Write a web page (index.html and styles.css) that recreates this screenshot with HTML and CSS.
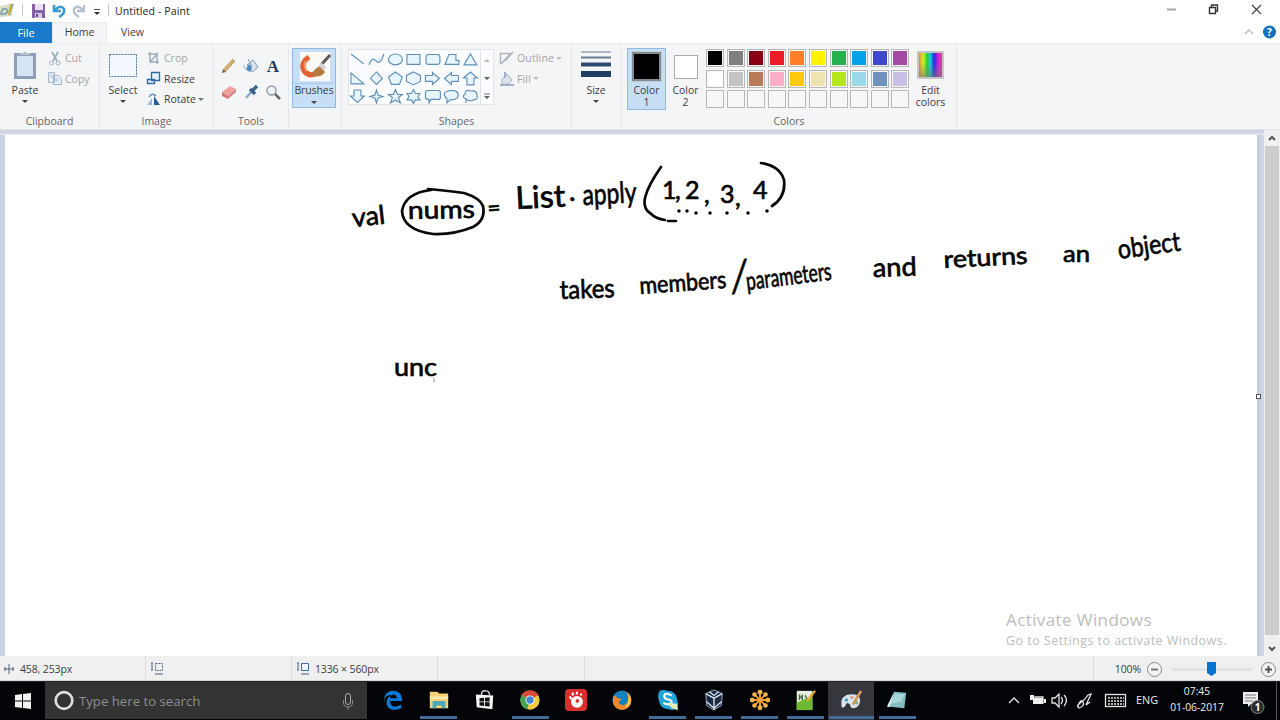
FILE: index.html
```html
<!DOCTYPE html>
<html lang="en">
<head>
<meta charset="utf-8">
<title>Untitled - Paint</title>
<link rel="stylesheet" href="styles.css">
</head>
<body>
<div class="window">
  <header class="titlebar">
    <svg class="quick" width="112" height="22" viewBox="0 0 112 22">
      <path d="M0 6l5-1 8-2-1 13-12 1z" fill="#d9dfc4"/><path d="M1 14q1-7 5-5t-1 5zM9 15l4-11" fill="none" stroke="#7f9fae" stroke-width="1.7"/><path d="M11 4l-2 11" stroke="#d8ae3c" stroke-width="2"/>
      <path d="M22.5 4v12M108.500 4v12" stroke="#c4c4c4"/>
      <path d="M32 4h13v14H32z" fill="#8560a8"/><path d="M35 4h8v6h-8z" fill="#e9e3f2"/><path d="M35 13h7v5h-7z" fill="#d6c8e4"/><path d="M36 14h2v3h-2z" fill="#65478c"/>
      <path d="M54 5v6h7M55 10q6-6 9-1 1 5-5 8" fill="none" stroke="#3a9ad0" stroke-width="2.6"/>
      <path d="M84 5v6h-7M83 10q-6-6-9-1-1 5 5 8" fill="none" stroke="#b4c1d0" stroke-width="2.3"/>
      <path d="M94 9.500h6" stroke="#555"/><path d="M94 12h6l-3 3z" fill="#333"/>
    </svg>
    <span class="title">Untitled - Paint</span>
    <svg class="winbtns" width="100" height="20" viewBox="0 0 100 20"><path d="M0 9.500h9" stroke="#aaa" stroke-width="2"/><path d="M42.500 7.500h6v6h-6zM44.500 7v-2h6v6h-2" fill="none" stroke="#333" stroke-width="1.400"/><path d="M85 5l9 9M94 5l-9 9" stroke="#444" stroke-width="1.200"/></svg>
  </header>
  <nav class="tabs">
    <span class="tab file">File</span><span class="tab home">Home</span><span class="tab view">View</span>
    <svg class="help" width="38" height="21" viewBox="0 0 38 21"><path d="M3 12l4-4 4 4" fill="none" stroke="#bbb" stroke-width="1.300"/><circle cx="27.500" cy="10" r="6.500" fill="#1472bd"/><text x="27.500" y="14" class="q">?</text></svg>
  </nav>

  <section class="ribbon">
    <div class="group clipboard">
      <div class="body">
        <div class="big paste"><svg width="26" height="32" viewBox="0 0 26 32"><rect x="2" y="9" width="22" height="26" fill="#8f9fb8"/><rect x="5" y="12" width="16" height="20" fill="#d6e3f3"/><path d="M8 11V9h3q2-3 4 0h3v2z" fill="#b9c1cd"/></svg><span>Paste</span><i></i></div>
        <div class="rows muted">
          <div><svg width="16" height="16" viewBox="0 0 16 16"><path d="M5 2l5 9M11 2L6 11" stroke="#a0adbe" stroke-width="1.700"/><circle cx="4.500" cy="13" r="2" fill="none" stroke="#9eb3cd"/><circle cx="11" cy="13" r="2" fill="none" stroke="#9eb3cd"/></svg>Cut</div>
          <div><svg width="16" height="16" viewBox="0 0 16 16"><path d="M1.500 1.500h6v10h-6zM6.500 4.500h5l3 3v6h-8z" fill="#e8eef5" stroke="#a6b6ca"/><path d="M8 8h4M8 10h4M3 4h3M3 6h3" stroke="#b2c5db"/></svg>Copy</div>
        </div>
      </div><footer>Clipboard</footer>
    </div>
    <div class="group image">
      <div class="body">
        <div class="big"><svg width="30" height="32" viewBox="0 0 30 32"><rect x="1.500" y="10.500" width="27" height="22" fill="#f2f8fe" stroke="#4d7199" stroke-dasharray="2 1"/></svg><span>Select</span><i></i></div>
        <div class="rows">
          <div class="off"><svg width="16" height="16" viewBox="0 0 16 16"><path d="M4 2v10h9M2 4h9v10M5 11l7-8" fill="none" stroke="#9caabb" stroke-width="1.400"/></svg>Crop</div>
          <div><svg width="16" height="16" viewBox="0 0 16 16"><path d="M5.500 1.500h8v8h-8zM1.500 8.500h7v4h-7z" fill="#e7f1fb" stroke="#2d6ba5" stroke-width="1.300"/></svg>Resize</div>
          <div><svg width="16" height="16" viewBox="0 0 16 16"><path d="M1 14l5-7v7z" fill="#9bbad8"/><path d="M8 5l6 9H8z" fill="#245f94"/><path d="M3 6q3-5 7-1" fill="none" stroke="#598db9" stroke-width="1.400"/></svg>Rotate<b></b></div>
        </div>
      </div><footer>Image</footer>
    </div>
    <div class="group tools">
      <div class="body toolgrid">
        <svg viewBox="0 0 18 18"><path d="M4 14L14 3" stroke="#c69a5c" stroke-width="3.500"/><path d="M4 14l9-10" stroke="#edcf93"/><path d="M2 16l1-4 3 3z" fill="#75624f"/></svg>
        <svg viewBox="0 0 18 18"><path d="M5 8l6-5 5 7-6 5z" fill="#d9e5ef" stroke="#819bb2"/><path d="M2 7q-1 5 2 5l3-5 3 4-2 4-5-3z" fill="#4d86bb"/><path d="M6 2l4 8" stroke="#8197ac"/></svg>
        <svg viewBox="0 0 18 18"><text class="letter" x="9" y="15">A</text></svg>
        <svg viewBox="0 0 18 18"><path d="M2 9l8-6 6 3-8 7z" fill="#f2a1a1"/><path d="M2 9l6 4v3l-6-3z" fill="#d87474"/><path d="M8 13l8-7v3l-8 7z" fill="#df8080"/></svg>
        <svg viewBox="0 0 18 18"><path d="M4 15l7-8" stroke="#8eabc9" stroke-width="2.500"/><path d="M8 6l5 5M10 8l5-5" stroke="#386691" stroke-width="3.500"/></svg>
        <svg viewBox="0 0 18 18"><circle cx="7.500" cy="7.500" r="4.500" fill="#edf4fa" stroke="#9299a2" stroke-width="1.400"/><path d="M11 11l5 5" stroke="#676a70" stroke-width="2.500"/></svg>
      </div><footer>Tools</footer>
    </div>
    <div class="group brushes"><div class="brushbtn">
      <svg width="41" height="34" viewBox="0 0 41 34"><rect x="6" y="3" width="30" height="29" fill="#fbfaf7"/><path d="M15 8q-9 6-5 14 6 7 14 1" fill="none" stroke="#df6334" stroke-width="5"/><path d="M12 12q-3 6 1 10" fill="none" stroke="#f49a62" stroke-width="2"/><path d="M36 6L27 16" stroke="#635752" stroke-width="3"/><path d="M18 27q2-8 8-10l5 6q-4 6-13 4z" fill="#b27c43"/><path d="M26 15l5 5" stroke="#d3d3d3" stroke-width="4"/></svg>
      <span>Brushes</span><i></i></div></div>
    <div class="group shapes">
      <div class="body">
        <div class="gallery">
          <div class="shapegrid">
            <svg viewBox="0 0 19 19"><path d="M3 4l13 10"/></svg>
            <svg viewBox="0 0 19 19"><path d="M2 15q3-9 7-4t8-7"/></svg>
            <svg viewBox="0 0 19 19"><ellipse cx="9.500" cy="9.500" rx="7" ry="5.500"/></svg>
            <svg viewBox="0 0 19 19"><path d="M3 4.500h13v10H3z"/></svg>
            <svg viewBox="0 0 19 19"><rect x="3" y="4.500" width="14" height="10" rx="2.500"/></svg>
            <svg viewBox="0 0 19 19"><path d="M7 4.500h7v6h3v4H3z"/></svg>
            <svg viewBox="0 0 19 19"><path d="M9.500 4l6.500 11H3z"/></svg>
            <svg viewBox="0 0 19 19"><path d="M3 4v11h13z"/></svg>
            <svg viewBox="0 0 19 19"><path d="M9.500 3l6 6.500-6 6-6-6z"/></svg>
            <svg viewBox="0 0 19 19"><path d="M9.500 3l7 5-3 7.500h-8l-3-7.500z"/></svg>
            <svg viewBox="0 0 19 19"><path d="M9.500 3l7 3.500v6l-7 3.500-7-3.500v-6z"/></svg>
            <svg viewBox="0 0 19 19"><path d="M2.500 6.500h7v-3l7 6-7 6v-3h-7z"/></svg>
            <svg viewBox="0 0 19 19"><path d="M16.500 6.500h-7v-3l-7 6 7 6v-3h7z"/></svg>
            <svg viewBox="0 0 19 19"><path d="M6 16V9H2.500l7-6 7 6H13v7z"/></svg>
            <svg viewBox="0 0 19 19"><path d="M6 3v6H2.500l7 6.500 7-6.500H13V3z"/></svg>
            <svg viewBox="0 0 19 19"><path d="M9.500 3l1.500 5 5 1.500-5 1.500-1.500 5-1.500-5-5-1.500 5-1.500z"/></svg>
            <svg viewBox="0 0 19 19"><path d="M9.500 2.500l2 5h5l-4 3 2 5.500-5-3-5 3 2-5.500-4-3h5z"/></svg>
            <svg viewBox="0 0 19 19"><path d="M9.500 2.500l2 4h4.500l-2 3 2 3.500h-4.500l-2 3.500-2-3.500H3l2-3.500-2-3h4.500z"/></svg>
            <svg viewBox="0 0 19 19"><path d="M4.500 3.500h11q2 0 2 2v5q0 2-2 2H8l-2 4v-4q-3.500 0-3.500-2v-5q0-2 2-2z"/></svg>
            <svg viewBox="0 0 19 19"><path d="M5 16v-4Q-1 6 6 4t10 2q2 7-8 7z"/></svg>
            <svg viewBox="0 0 19 19"><path d="M5 16v-4Q0 10 4 7q0-5 6-3 6-1 6 4 2 5-4 5-4 2-7-1"/></svg>
          </div>
          <div class="scroller"><svg width="12" height="56" viewBox="0 0 12 56"><path d="M3 12l3-3 3 3z" fill="#bbb"/><path d="M3 27h6l-3 3zM3 46h6l-3 3z" fill="#666"/><path d="M3 44h6" stroke="#777"/></svg></div>
        </div>
        <div class="rows muted">
          <div><svg width="16" height="16" viewBox="0 0 16 16"><path d="M1.500 3.500h10l-9 10h-1zM6 11l8-9" fill="none" stroke="#aeb5be" stroke-width="1.500"/></svg>Outline<b></b></div>
          <div><svg width="16" height="16" viewBox="0 0 16 16"><path d="M3 8l5-5 5 6-4 4H3z" fill="#dde4ee" stroke="#a2b0c3"/><path d="M1 14h14M6 1v6" stroke="#a2b0c3" stroke-width="2"/></svg>Fill<b></b></div>
        </div>
      </div><footer>Shapes</footer>
    </div>
    <div class="group size"><div class="big"><svg width="30" height="32" viewBox="0 0 30 32"><path d="M0 8h30" stroke="#afb8c3" stroke-width="2"/><path d="M0 13.500h30" stroke="#697b91" stroke-width="2"/><path d="M0 20.500h30" stroke="#2b486d" stroke-width="4"/><path d="M0 30h30" stroke="#203c63" stroke-width="6"/></svg><span>Size</span><i></i></div></div>
    <div class="group colors">
      <div class="body">
        <div class="pick active"><em class="black"></em><span>Color<br>1</span></div>
        <div class="pick"><em></em><span>Color<br>2</span></div>
        <div class="palette">
          <u class="k1"></u><u class="k2"></u><u class="k3"></u><u class="k4"></u><u class="k5"></u><u class="k6"></u><u class="k7"></u><u class="k8"></u><u class="k9"></u><u class="k10"></u>
          <u class="k11"></u><u class="k12"></u><u class="k13"></u><u class="k14"></u><u class="k15"></u><u class="k16"></u><u class="k17"></u><u class="k18"></u><u class="k19"></u><u class="k20"></u>
          <u></u><u></u><u></u><u></u><u></u><u></u><u></u><u></u><u></u><u></u>
        </div>
        <div class="edit"><em></em><span>Edit<br>colors</span></div>
      </div><footer>Colors</footer>
    </div>
  </section>

  <main class="workspace">
    <div class="canvas">
      <svg class="ink" width="1252" height="521" viewBox="5 135 1252 521">
        <g class="pen">
          <text transform="translate(353 227) rotate(-6)" font-size="26" textLength="33" lengthAdjust="spacingAndGlyphs">val</text>
          <text transform="translate(408 219) rotate(-1)" font-size="25" textLength="67" lengthAdjust="spacingAndGlyphs">nums</text>
          <text transform="translate(488 216) rotate(-4)" font-size="22" textLength="13" lengthAdjust="spacingAndGlyphs">=</text>
          <text transform="translate(516 209) rotate(-3)" font-size="31" textLength="50" lengthAdjust="spacingAndGlyphs">List</text>
          <text x="569" y="201" font-size="28">.</text>
          <text transform="translate(583 205) rotate(-3)" font-size="29" textLength="54" lengthAdjust="spacingAndGlyphs">apply</text>
          <text font-size="25" x="662 675 685 704 720 735 753" y="199 199 199 203 203 206 199">1,2,3,4</text>
          <text transform="translate(560 299) rotate(-2)" font-size="26" textLength="55" lengthAdjust="spacingAndGlyphs">takes</text>
          <text transform="translate(640 294) rotate(-4)" font-size="24" textLength="87" lengthAdjust="spacingAndGlyphs">members</text>
          <text transform="translate(731 292) rotate(3)" font-size="46" textLength="15" lengthAdjust="spacingAndGlyphs">/</text>
          <text transform="translate(747 290) rotate(-7)" font-size="25" textLength="86" lengthAdjust="spacingAndGlyphs">parameters</text>
          <text transform="translate(873 277) rotate(-2)" font-size="26" textLength="44" lengthAdjust="spacingAndGlyphs">and</text>
          <text transform="translate(944 268) rotate(-3)" font-size="24" textLength="84" lengthAdjust="spacingAndGlyphs">returns</text>
          <text transform="translate(1063 262)" font-size="24" textLength="27" lengthAdjust="spacingAndGlyphs">an</text>
          <text transform="translate(1119 259) rotate(-8)" font-size="27" textLength="63" lengthAdjust="spacingAndGlyphs">object</text>
          <text transform="translate(394 376)" font-size="25" textLength="43" lengthAdjust="spacingAndGlyphs">unc</text>
        </g>
        <g class="strokes">
          <path d="M431 190Q405 193 402 211q1 19 31 23 20 1 40-7 13-7 10-21-3-8-19-13-14-2-36-4"/>
          <path d="M661 167Q635 204 650 213q6 6 15 7M668 221h8M761 163q19 3 23 17 2 17-12 26"/>
          <path class="dots" d="M679 211h0M687 211h0M696 213h0M710 213h0M727 213h0M748 213h0M767 211h0"/>
          <path class="faint" d="M434 378v4"/>
        </g>
      </svg>
      <div class="activate"><strong>Activate Windows</strong><span>Go to Settings to activate Windows.</span></div>
    </div>
    <div class="edge"><span></span></div>
    <div class="scrollbar"><svg width="16" height="16" viewBox="0 0 16 16"><path d="M5 10l3-3 3 3" fill="none" stroke="#555" stroke-width="2"/></svg><span class="thumb"></span><svg width="16" height="16" viewBox="0 0 16 16"><path d="M5 7l3 3 3-3" fill="none" stroke="#555" stroke-width="2"/></svg></div>
  </main>

  <div class="status">
    <div class="cell s1"><svg width="12" height="12" viewBox="0 0 12 12"><path d="M1 6h10M6 1v10M2 4v4M10 4v4" stroke="#52657d"/></svg>458, 253px</div>
    <div class="cell s2"><svg width="14" height="14" viewBox="0 0 14 14"><path d="M2 1v7M1 1h2M1 8h2M5 12h8" stroke="#53677e"/><path d="M5.500 1.500h7v7h-7z" fill="none" stroke="#53677e" stroke-dasharray="2 1"/></svg></div>
    <div class="cell s3"><svg width="14" height="14" viewBox="0 0 14 14"><path d="M2 1v7M1 1h2M1 8h2M5 12h8" stroke="#53677e"/><path d="M5.500 1.500h7v7h-7z" fill="#f4f8fc" stroke="#416b94"/></svg>1336 × 560px</div>
    <div class="cell s4"></div>
    <div class="cell s5"></div>
    <div class="zoomctl"><span>100%</span><svg width="139" height="25" viewBox="0 0 139 25"><circle cx="13.500" cy="13.500" r="7" fill="#f4f4f4" stroke="#888"/><path d="M10 13.500h7" stroke="#777" stroke-width="2"/><path d="M31 13.500h80" stroke="#e2e2e2" stroke-width="3"/><path d="M66 6h9v11l-4.500 3-4.500-3z" fill="#0874d0"/><circle cx="127.500" cy="13.500" r="7" fill="#f4f4f4" stroke="#888"/><path d="M124 13.500h7M127.500 10v7" stroke="#555" stroke-width="2"/></svg></div>
  </div>

  <footer class="taskbar">
    <div class="start"><svg width="16" height="16" viewBox="0 0 16 16"><path d="M0 2l7-1v6.500H0zM8 1l8-1v7.500H8zM0 8.500h7V15l-7-1zM8 8.500h8V16l-8-1z" fill="#f4f4f4"/></svg></div>
    <div class="search"><svg width="20" height="20" viewBox="0 0 20 20"><circle cx="10" cy="9.500" r="8.300" fill="none" stroke="#dedede" stroke-width="2.700"/></svg><span>Type here to search</span><svg width="12" height="18" viewBox="0 0 12 18"><rect x="3.500" y="1.500" width="5" height="11" rx="2.500" fill="none" stroke="#aaa"/><path d="M1.500 8v4q1 3 4.500 3t4.500-3V8M6 15v3" fill="none" stroke="#888"/></svg></div>
    <div class="apps">
      <div class="app"><svg viewBox="0 0 24 24"><path d="M3 14Q1 3 12 2q10 0 10 11H9q0 7 6 6 3 0 6-2v4q-14 5-16-5-1-8 7-9-9-2-9 7zm6-4h7q0-4-3.500-4T9 10z" fill="#0879d9"/></svg></div>
      <div class="app open"><svg viewBox="0 0 24 24"><path d="M2 3h8l2 2h10v16H2z" fill="#f5d276"/><path d="M2 8h20v3H2z" fill="#fce9a9"/><path d="M5 21v-8h14v8h-4v-3H9v3z" fill="#49a9ba"/></svg></div>
      <div class="app"><svg viewBox="0 0 24 24"><path d="M2 6l19 1-1 15-17-2z" fill="#f4f4f4"/><path d="M8 7q0-6 5-5 4 0 4 5" fill="none" stroke="#ddd" stroke-width="1.500"/><path d="M6 10l5-.5v4H6zM12 9.500l5-.5v4.500h-5zM6 14.500h5v4l-5-.5zM12 14.500h5V19l-5-.5z" fill="#111"/></svg></div>
      <div class="app open"><svg viewBox="0 0 24 24"><circle cx="12" cy="12" r="10.500" fill="#f0ca43"/><path d="M12 12L3 6.500A10.500 10.500 0 0121 6.500z" fill="#d94a3d"/><path d="M12 12L3 6.500a10.500 10.500 0 006 15.700z" fill="#47a354"/><circle cx="12" cy="12" r="5" fill="#fff"/><circle cx="12" cy="12" r="4" fill="#4485d6"/></svg></div>
      <div class="app"><svg viewBox="0 0 24 24"><rect x="0" y="0" width="24" height="24" rx="4" fill="#d92d2e"/><circle cx="13" cy="14" r="6.500" fill="#fff"/><circle cx="13.500" cy="13" r="2" fill="#db3737"/><path d="M5 8l2 3M8 4l1 3M13 3v3M18 5l-1 2" stroke="#fff" stroke-width="2.200"/></svg></div>
      <div class="app"><svg viewBox="0 0 24 24"><circle cx="12" cy="12" r="10.500" fill="#1682bd"/><path d="M3 7q3 0 4 3l5 1q-4 2-3 5 6 4 9-2 3-7-2-11 6 2 6 9 0 10-10 11Q2 22 2 12z" fill="#ef892b"/><path d="M18 5q5 5 3 11-3 4-6 4 6-7 3-15z" fill="#f5c847"/></svg></div>
      <div class="app open"><svg viewBox="0 0 24 24"><path d="M3 2q4-2 8 0 10 0 11 10 2 6-1 9-4 3-8 1Q3 22 2 12 0 7 3 2z" fill="#22a5da"/><path d="M16 7Q8 3 8 8q0 3 4 3.500 6 1 3 4.500-4 2-8-1" fill="none" stroke="#fff" stroke-width="2.300"/><path d="M12 15l10 1 1 7q-9-1-11-8z" fill="#e4edb5"/></svg></div>
      <div class="app open"><svg viewBox="0 0 24 24"><path d="M12 1l9 4-1 13-8 5-8-5L3 5z" fill="#1b2941" stroke="#a5b3ca"/><path d="M3 5l9 5 9-5M12 10v13M7 3l5 4 5-4M4 14l8 7 8-7" fill="none" stroke="#d8e1ee" stroke-width="1.500"/></svg></div>
      <div class="app open"><svg viewBox="0 0 24 24"><path d="M12 3v18M3 12h18M6 6l12 12M18 6L6 18" stroke="#ef9f31" stroke-width="2"/><g fill="#f4b348"><circle cx="12" cy="3.500" r="2.700"/><circle cx="12" cy="20.500" r="2.700"/><circle cx="3.500" cy="12" r="2.700"/><circle cx="20.500" cy="12" r="2.700"/><circle cx="6" cy="6" r="2.500"/><circle cx="18" cy="6" r="2.500"/><circle cx="6" cy="18" r="2.500"/><circle cx="18" cy="18" r="2.500"/></g></svg></div>
      <div class="app open"><svg viewBox="0 0 24 24"><path d="M3 2h17v21H3z" fill="#e7eedc"/><path d="M3 15q8-4 17-7v15H3z" fill="#6cb82f"/><path d="M6 6v6M9 6v6M6 9h3M12 7l3 5" fill="none" stroke="#416044" stroke-width="1.500"/><path d="M23 2L14 13" stroke="#e8ad35" stroke-width="2.500"/></svg></div>
      <div class="app open current"><svg viewBox="0 0 24 24"><path d="M2 20Q-1 8 10 6q12-2 12 7-1 7-7 8-4 0-4-4-4-4-5 1-1 3-4 2z" fill="#d8e4eb"/><circle cx="7" cy="12" r="2" fill="#4b9fc2"/><circle cx="13" cy="9" r="1.700" fill="#d79a76"/><circle cx="18" cy="15" r="2" fill="#83aa79"/><path d="M23 2L14 17" stroke="#d29759" stroke-width="3"/></svg></div>
      <div class="app open"><svg viewBox="0 0 24 24"><path d="M9 3l13 1-2 17-18-2z" fill="#80bdc3"/><path d="M9 3L1 19l3 1z" fill="#dceced"/><path d="M10 5l10 1-3 8-12 2z" fill="#a8d7d9"/></svg></div>
    </div>
    <div class="tray">
      <svg width="132" height="38" viewBox="0 0 132 38"><g fill="none" stroke="#e5e5e5" stroke-width="1.300"><path d="M9 21l5-5 5 5M43 15h-8v6h8zM52 16h3l4-4v13l-4-4h-3zM61 15q3 3 0 7M64 13q5 5 0 11M78 24q3-8 5-4t-4 6q-3-2 0-4 6-4 9-9l3-1-5 11 4-3"/><rect x="105.500" y="12.500" width="20" height="12"/><path stroke-dasharray="2 1" d="M108 16h16M108 19h16M108 22h16"/></g><path d="M33 16h10v6H33zM44 17h2v4h-2zM30 13h4v5h-4z" fill="#eee"/></svg>
      <span class="lang">ENG</span><div class="clock">07:45<br>01-06-2017</div>
      <svg class="note" width="26" height="38" viewBox="0 0 26 38"><path d="M1 10h15v12H9l-3 3v-3H1z" fill="#eee"/><path d="M3 13h11M3 16h11M3 19h8" stroke="#777"/><circle cx="15.500" cy="25" r="6.500" fill="#292c31" stroke="#888"/><text class="badge" x="15.500" y="29">1</text></svg>
      <span class="peek"></span>
    </div>
  </footer>
</div>
</body>
</html>
```
FILE: styles.css
```css
*{box-sizing:border-box}
body{margin:0;background:#fff;overflow:hidden}
svg{display:block;flex:none;overflow:visible}
.window{width:1280px;height:720px;display:flex;flex-direction:column;font:11px/12px "Open Sans","Noto Sans",sans-serif;color:#3d3d3d}
.titlebar{height:22px;display:flex;flex:none}
.title{padding:5px 0 0 3px;font-size:10.500px;color:#222;letter-spacing:.12px}
.winbtns{margin-left:auto;margin-right:13px}
.tabs{height:21px;flex:none;display:flex}
.tab{text-align:center;line-height:21px;font-size:10.800px}
.file{width:52px;background:#1979ca;color:#fff}
.home{width:55px;background:#f4f5f7;border:1px solid #e9eaec;border-bottom:0;line-height:19px;font-size:10.500px}
.view{width:51px;font-size:10.500px}
.help{margin-left:auto;margin-right:0}
.q{font:bold 10px "Open Sans",sans-serif;fill:#fff;text-anchor:middle}
.ribbon{height:87px;flex:none;display:flex;background:#f4f5f7;border-top:1px solid #eceef0;border-bottom:1px solid #e3e5eb}
.group{height:84px;display:flex;flex-direction:column;border-right:1px solid #e6e7ea;font-size:10.500px}
.body{height:70px;display:flex;flex:none}
.group>footer{text-align:center;line-height:14px;color:#666}
.clipboard{width:100px}.image{width:114px}.tools{width:75px}.brushes{width:53px}.shapes{width:230px}.size{width:50px}.colors{width:335px}
.big{width:50px;display:flex;flex-direction:column;align-items:center}
.big span{margin-top:8px;line-height:12px}
.big i,.brushbtn i{border:3px solid transparent;border-top-color:#444;border-bottom:0;margin-top:4px;height:3px}
.image .big{width:46px}.size .big{width:48px}
.rows{padding-top:4px}
.rows>div{height:20.500px;display:flex;align-items:center;white-space:nowrap;gap:2px}
.rows b{border:3px solid transparent;border-top-color:#777;border-bottom:0;margin-left:0}
.muted,.off{color:#a4a4a4}.muted b{border-top-color:#bbb}
.clipboard .rows{margin-left:-3px}
.toolgrid{display:grid;grid-template-columns:repeat(3,22px);grid-template-rows:26px 26px;padding:13px 0 0 4px}
.toolgrid svg{width:18px;height:18px;margin-left:2px}
.letter{font:bold 17px "Liberation Serif",serif;fill:#263b59;text-anchor:middle}
.brushbtn{width:44px;height:60px;margin:4px 0 0 3px;border:1px solid #92b9df;background:#c7dff6;display:flex;flex-direction:column;align-items:center}
.brushbtn span{border-top:1px solid #a7c9e9;line-height:13px;letter-spacing:-.1px}
.gallery{width:146px;height:56px;margin:5px 0 0 6px;display:flex;border:1px solid #e1e5ea;background:#fafcff}
.shapegrid{width:132px;display:grid;grid-template-columns:repeat(7,18.800px);grid-template-rows:repeat(3,18.500px);margin-left:-1px}
.shapegrid svg{width:18.900px;height:18.900px}
.shapegrid path,.shapegrid ellipse,.shapegrid rect{fill:#e8f5fc;stroke:#6090b9;stroke-width:1.150}
.scroller{border-left:1px solid #e0e3e8}
.shapes .rows{margin-left:5px;letter-spacing:.15px}
.colors .body{padding-left:5px}
.pick{width:39px;height:62px;margin-top:4px;text-align:center;border:1px solid transparent;display:flex;flex-direction:column;align-items:center}
.pick em{width:24px;height:24px;margin:6px 0 5px;border:1px solid #aaa;background:#fff}
.pick .black{width:29px;height:29px;margin:3px 0 3px;background:#000;border:2px solid #828b93;outline:1px solid #c4ccd3}
.pick span,.edit span{line-height:12px}
.pick.active{background:#c7dff6;border-color:#92b9df}
.palette{display:grid;grid-template-columns:repeat(10,18px);grid-template-rows:repeat(3,18px);column-gap:2.600px;row-gap:2.600px;padding:5px 0 0 1px;width:210px}
.palette u{background:#f7f7f8;border:1px solid #b8b8b8;box-shadow:inset 0 0 0 1px #f8f8f8}
.k1{background:#000!important}.k2{background:#7f7f7f!important}.k3{background:#880015!important}.k4{background:#ed1c24!important}.k5{background:#ff7f27!important}.k6{background:#fff200!important}.k7{background:#22b14c!important}.k8{background:#00a2e8!important}.k9{background:#3f48cc!important}.k10{background:#a349a4!important}.k11{background:#fff!important}.k12{background:#c3c3c3!important}.k13{background:#b97a57!important}.k14{background:#ffaec9!important}.k15{background:#ffc90e!important}.k16{background:#efe4b0!important}.k17{background:#b5e61d!important}.k18{background:#99d9ea!important}.k19{background:#7092be!important}.k20{background:#c8bfe7!important}
.edit{text-align:center;width:31px;display:flex;flex-direction:column;align-items:center}
.edit em{width:27px;height:28px;margin:7px 0 5px;border:2px solid #c5c5c5;background:linear-gradient(0deg,#7779,transparent 60%),linear-gradient(90deg,#e68a41,#d7ef24 18%,#26d435 36%,#16c6e9 50%,#252bd8 66%,#cf23e0 84%,#ec3a83)}
.workspace{height:526px;flex:none;display:flex;background:#cbd3e3;padding:5px 0 0 5px;position:relative}
.workspace:before{content:"";position:absolute;left:0;top:0;width:1264px;height:5px;background:linear-gradient(#cfd1df,#d0d5e2 60%,#eef1f6)}
.canvas{width:1252px;height:521px;background:#fff;position:relative}
.pen{font-family:Lato,"Open Sans",sans-serif;font-weight:400;fill:#050505;stroke:#050505;stroke-width:.7px}
.strokes{fill:none;stroke:#080808;stroke-width:2.700px;stroke-linecap:round;stroke-linejoin:round}
.dots{stroke-width:3.500px}.faint{stroke:#999;stroke-width:1px}
.activate{position:absolute;left:1001px;top:474px;color:#bcbcbc;display:flex;flex-direction:column}
.activate strong{font-weight:400;font-size:17px;line-height:22px;letter-spacing:.4px}
.activate span{font-size:12.500px;line-height:20px;letter-spacing:.46px;white-space:nowrap}
.edge{width:7px;background:linear-gradient(90deg,#c2cbdb,#ced8e9);height:521px;padding-top:259px}
.edge span{display:block;width:5px;height:5px;border:1px solid #555;background:#fff;position:relative;left:-1px}
.scrollbar{width:16px;height:526px;margin-top:-5px;background:#f0f0f0;display:flex;flex-direction:column}
.thumb{flex:1;background:#cdcdcd;margin:0 1px 5px}
.status{height:25px;flex:none;display:flex;background:#f0f0f0;border-bottom:1px solid #d6d6d6;font-size:10.500px;letter-spacing:-.13px}
.cell{border-right:1px solid #dedede;display:flex;align-items:center;padding-left:3px;padding-top:2px;gap:5px}
.s1{width:146px}.s2{width:146px;padding-left:4px}.s3{width:146px;padding-left:4px}.s4{width:147px}.s5{width:509px}
.zoomctl{display:flex;align-items:center;margin-left:auto;padding-top:1px}
.taskbar{height:39px;display:flex;background:#030407;border-top:1px solid #20232a;color:#eee}
.start{width:45px;display:flex;justify-content:center;align-items:center}
.search{width:322px;height:37px;background:#333334;display:flex;align-items:center;padding:0 13px 0 9px;color:#8e8e8e;font-size:13.200px}
.search span{margin-left:5px;line-height:20px}.search>svg:last-child{margin-left:auto}
.apps{width:551px;margin-left:3px;display:grid;grid-template-columns:repeat(12,45.830px)}
.app{height:38px;display:flex;flex-direction:column;align-items:center;padding-top:7px}
.app svg{width:22px;height:22px}
.open:after{content:"";width:37px;height:3px;background:#426b98;margin-top:5px}
.current{background:#36373d}.current:after{width:45px}
.tray{margin-left:auto;display:flex;align-items:center}
.lang{font-size:10.800px;margin-left:4px;width:30px;margin-top:-3px}
.clock{width:64px;text-align:center;font-size:10.300px;line-height:16px;margin:-4px 1px 0 -1px}
.note{margin-left:12px}.badge{font:bold 10px "Open Sans",sans-serif;fill:#fff;text-anchor:middle}
.peek{width:1px;height:38px;background:#555;margin:0 3px 0 8px}
```
